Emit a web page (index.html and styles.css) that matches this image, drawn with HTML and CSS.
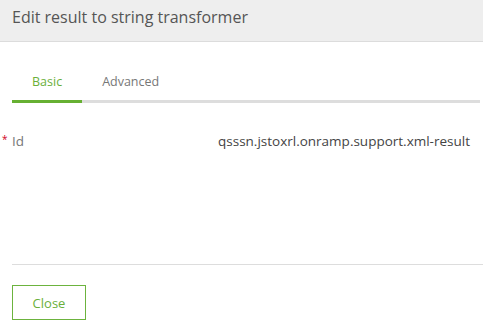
FILE: index.html
```html
<!DOCTYPE html>
<html>
<head>
<meta charset="utf-8">
<link rel="stylesheet" href="styles.css">
</head>
<body>
<div class="dialog">
  <div class="dialog-header">
    <h1 class="dialog-title">Edit result to string transformer</h1>
  </div>
  <div class="dialog-body">
    <div class="tabs">
      <div class="tab tab-active">Basic</div>
      <div class="tab">Advanced</div>
    </div>
    <div class="field-row">
      <div class="field-label"><span class="required">*</span>Id</div>
      <div class="field-value">qsssn.jstoxrl.onramp.support.xml-result</div>
    </div>
  </div>
  <div class="dialog-footer">
    <button class="btn-close">Close</button>
  </div>
</div>
</body>
</html>
```
FILE: styles.css
```css
html, body {
  margin: 0;
  padding: 0;
  background: #ffffff;
}
body {
  font-family: "Open Sans", "Noto Sans", sans-serif;
  color: #555;
  width: 483px;
  height: 333px;
  overflow: hidden;
}
.dialog {
  display: flex;
  flex-direction: column;
}
.dialog-header {
  height: 41px;
  background: #eeeeee;
  border-bottom: 1px solid #dcdcdc;
  display: flex;
  align-items: flex-start;
  padding-left: 12px;
  box-sizing: content-box;
}
.dialog-title {
  margin: 0;
  padding-top: 6px;
  line-height: 22px;
  font-size: 16px;
  font-weight: normal;
  color: #555;
}
.dialog-body {
  padding: 20px 3px 0 12px;
  height: 202px;
}
.tabs {
  display: flex;
  border-bottom: 3px solid #dddddd;
}
.tab {
  padding: 0 20px;
  height: 38px;
  display: flex;
  align-items: center;
  font-size: 12.5px;
  color: #777;
  margin-bottom: -3px;
  border-bottom: 3px solid transparent;
}
.tab-active {
  color: #6aaf3a;
  border-bottom-color: #66b032;
}
.field-row {
  display: flex;
  justify-content: space-between;
  align-items: center;
  margin-top: 26px;
  height: 24px;
  padding-right: 10px;
  font-size: 13.5px;
  color: #555;
}
.field-label {
  position: relative;
  color: #777;
}
.required {
  position: absolute;
  left: -10px;
  top: 0;
  color: #d0021b;
  font-size: 10px;
}
.field-value {
  color: #444;
}
.dialog-footer {
  margin-left: 12px;
  border-top: 1px solid #dddddd;
  padding-top: 20px;
}
.btn-close {
  width: 74px;
  height: 35px;
  background: #fff;
  border: 1px solid #6cb33e;
  color: #6aaf3a;
  font-family: "Open Sans", "Noto Sans", sans-serif;
  font-size: 13px;
  padding: 0;
  cursor: pointer;
}
```
